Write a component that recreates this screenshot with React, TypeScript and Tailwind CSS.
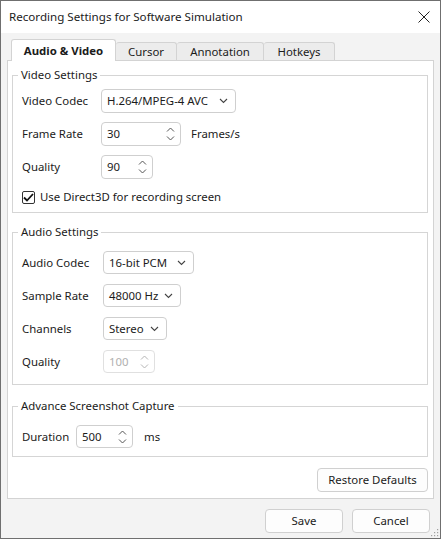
const font = { fontFamily: '"Noto Sans", "Liberation Sans", sans-serif' };

const Chevron = ({ dim }: { dim?: boolean }) => (
  <svg width="9" height="6" viewBox="0 0 9 6" className="shrink-0">
    <path d="M1 1 L4.5 4.5 L8 1" fill="none" stroke={dim ? "#b5b5b5" : "#444"} strokeWidth="1.1" />
  </svg>
);

const UpDown = ({ dim }: { dim?: boolean }) => (
  <svg width="9" height="16" viewBox="0 0 9 16" className="shrink-0">
    <path d="M1 5.5 L4.5 2 L8 5.5" fill="none" stroke={dim ? "#b5b5b5" : "#555"} strokeWidth="1" />
    <path d="M1 10.5 L4.5 14 L8 10.5" fill="none" stroke={dim ? "#b5b5b5" : "#555"} strokeWidth="1" />
  </svg>
);

const Select = ({ value, w, h = "h-[24px]" }: { value: string; w: string; h?: string }) => (
  <div className={`${w} ${h} flex items-center justify-between rounded-[4px] border border-[#cfcfcf] bg-white pl-[5px] pr-[7px]`}>
    <span>{value}</span>
    <Chevron />
  </div>
);

const Spin = ({ value, w, h = "h-[24px]", disabled }: { value: string; w: string; h?: string; disabled?: boolean }) => (
  <div
    className={`${w} ${h} flex items-center justify-between rounded-[4px] border bg-white pl-[5px] pr-[5px] ${
      disabled ? "border-[#e0e0e0] text-[#b0b0b0]" : "border-[#cfcfcf]"
    }`}
  >
    <span>{value}</span>
    <UpDown dim={disabled} />
  </div>
);

const Button = ({ label, w }: { label: string; w: string }) => (
  <div className={`${w} h-[24px] flex items-center justify-center rounded-[4px] border border-[#d0d0d0] bg-[#fdfdfd]`}>
    {label}
  </div>
);

const Legend = ({ children }: { children: string }) => (
  <legend className="ml-[-4px] px-[3px] leading-[16px]">{children}</legend>
);

export default function App() {
  return (
    <div
      className="relative w-[441px] h-[539px] border border-[#6f6f6f] bg-[#f3f3f3] text-[11.4px] text-[#1b1b1b] flex flex-col"
      style={font}
    >
      {/* title bar */}
      <div className="h-[32px] shrink-0 bg-white flex items-center justify-between pl-[8px] pr-[10px]">
        <span className="text-[11.6px]">Recording Settings for Software Simulation</span>
        <svg width="12" height="12" viewBox="0 0 12 12">
          <path d="M0.5 0.5 L11.5 11.5 M11.5 0.5 L0.5 11.5" stroke="#222" strokeWidth="1" />
        </svg>
      </div>

      <div className="flex flex-col px-[6px] pt-[6px]">
        {/* tabs */}
        <div className="flex items-end pl-[4px] h-[21px]">
          <div className="relative z-10 w-[105px] h-[22px] mb-[-1px] flex items-center justify-center bg-white border border-b-0 border-[#d3d3d3] rounded-t-[3px] font-bold">
            Audio &amp; Video
          </div>
          <div className="w-[61px] h-[18px] flex items-center justify-center bg-[#ececec] border border-l-0 border-b-0 border-[#d3d3d3] rounded-t-[3px]">
            Cursor
          </div>
          <div className="w-[87px] h-[18px] flex items-center justify-center bg-[#ececec] border border-l-0 border-b-0 border-[#d3d3d3] rounded-t-[3px]">
            Annotation
          </div>
          <div className="w-[71px] h-[18px] flex items-center justify-center bg-[#ececec] border border-l-0 border-b-0 border-[#d3d3d3] rounded-t-[3px]">
            Hotkeys
          </div>
        </div>

        {/* panel */}
        <div className="h-[439px] border border-[#d3d3d3] bg-white flex flex-col">
          <fieldset className="mt-[6px] ml-[4px] mr-[5px] border border-[#d5d5d5] pl-[9px] pt-[6px] pb-[7px]">
            <Legend>Video Settings</Legend>
            <div className="flex flex-col gap-[9px]">
              <div className="flex items-center h-[24px]">
                <span className="w-[79px]">Video Codec</span>
                <Select value="H.264/MPEG-4 AVC" w="w-[135px]" />
              </div>
              <div className="flex items-center h-[24px]">
                <span className="w-[79px]">Frame Rate</span>
                <Spin value="30" w="w-[80px]" />
                <span className="ml-[10px]">Frames/s</span>
              </div>
              <div className="flex items-center h-[24px]">
                <span className="w-[79px]">Quality</span>
                <Spin value="90" w="w-[52px]" />
              </div>
            </div>
            <div className="flex items-center h-[16px] mt-[10px]">
              <div className="w-[13px] h-[13px] border border-[#333] rounded-[2px] bg-white flex items-center justify-center">
                <svg width="11" height="9" viewBox="0 0 11 9">
                  <path d="M1 4.5 L4 7.5 L10 1" fill="none" stroke="#111" strokeWidth="1.8" />
                </svg>
              </div>
              <span className="ml-[5px]">Use Direct3D for recording screen</span>
            </div>
          </fieldset>

          <fieldset className="mt-[11px] ml-[4px] mr-[5px] border border-[#d5d5d5] pl-[9px] pt-[11px] pb-[11px]">
            <Legend>Audio Settings</Legend>
            <div className="flex flex-col gap-[10px]">
              <div className="flex items-center h-[23px]">
                <span className="w-[81px]">Audio Codec</span>
                <Select value="16-bit PCM" w="w-[91px]" h="h-[23px]" />
              </div>
              <div className="flex items-center h-[23px]">
                <span className="w-[81px]">Sample Rate</span>
                <Select value="48000 Hz" w="w-[78px]" h="h-[23px]" />
              </div>
              <div className="flex items-center h-[23px]">
                <span className="w-[81px]">Channels</span>
                <Select value="Stereo" w="w-[64px]" h="h-[23px]" />
              </div>
              <div className="flex items-center h-[23px]">
                <span className="w-[81px]">Quality</span>
                <Spin value="100" w="w-[52px]" h="h-[23px]" disabled />
              </div>
            </div>
          </fieldset>

          <fieldset className="mt-[13px] ml-[4px] mr-[5px] border border-[#d5d5d5] pl-[9px] pt-[11px] pb-[8px]">
            <Legend>Advance Screenshot Capture</Legend>
            <div className="flex items-center h-[23px]">
              <span className="w-[54px]">Duration</span>
              <Spin value="500" w="w-[57px]" h="h-[23px]" />
              <span className="ml-[11px]">ms</span>
            </div>
          </fieldset>

          <div className="mt-[11px] mr-[5px] flex justify-end">
            <Button label="Restore Defaults" w="w-[111px]" />
          </div>
        </div>

        {/* footer buttons */}
        <div className="mt-[10px] mr-[4px] flex justify-end gap-[9px]">
          <Button label="Save" w="w-[78px]" />
          <Button label="Cancel" w="w-[78px]" />
        </div>
      </div>

      {/* resize grip */}
      <svg className="absolute right-[1px] bottom-[1px]" width="8" height="8" viewBox="0 0 8 8">
        <rect x="6" y="0" width="1.2" height="1.2" fill="#a0a0a0" />
        <rect x="3" y="3" width="1.2" height="1.2" fill="#a0a0a0" />
        <rect x="6" y="3" width="1.2" height="1.2" fill="#a0a0a0" />
        <rect x="0" y="6" width="1.2" height="1.2" fill="#a0a0a0" />
        <rect x="3" y="6" width="1.2" height="1.2" fill="#a0a0a0" />
        <rect x="6" y="6" width="1.2" height="1.2" fill="#a0a0a0" />
      </svg>
    </div>
  );
}
